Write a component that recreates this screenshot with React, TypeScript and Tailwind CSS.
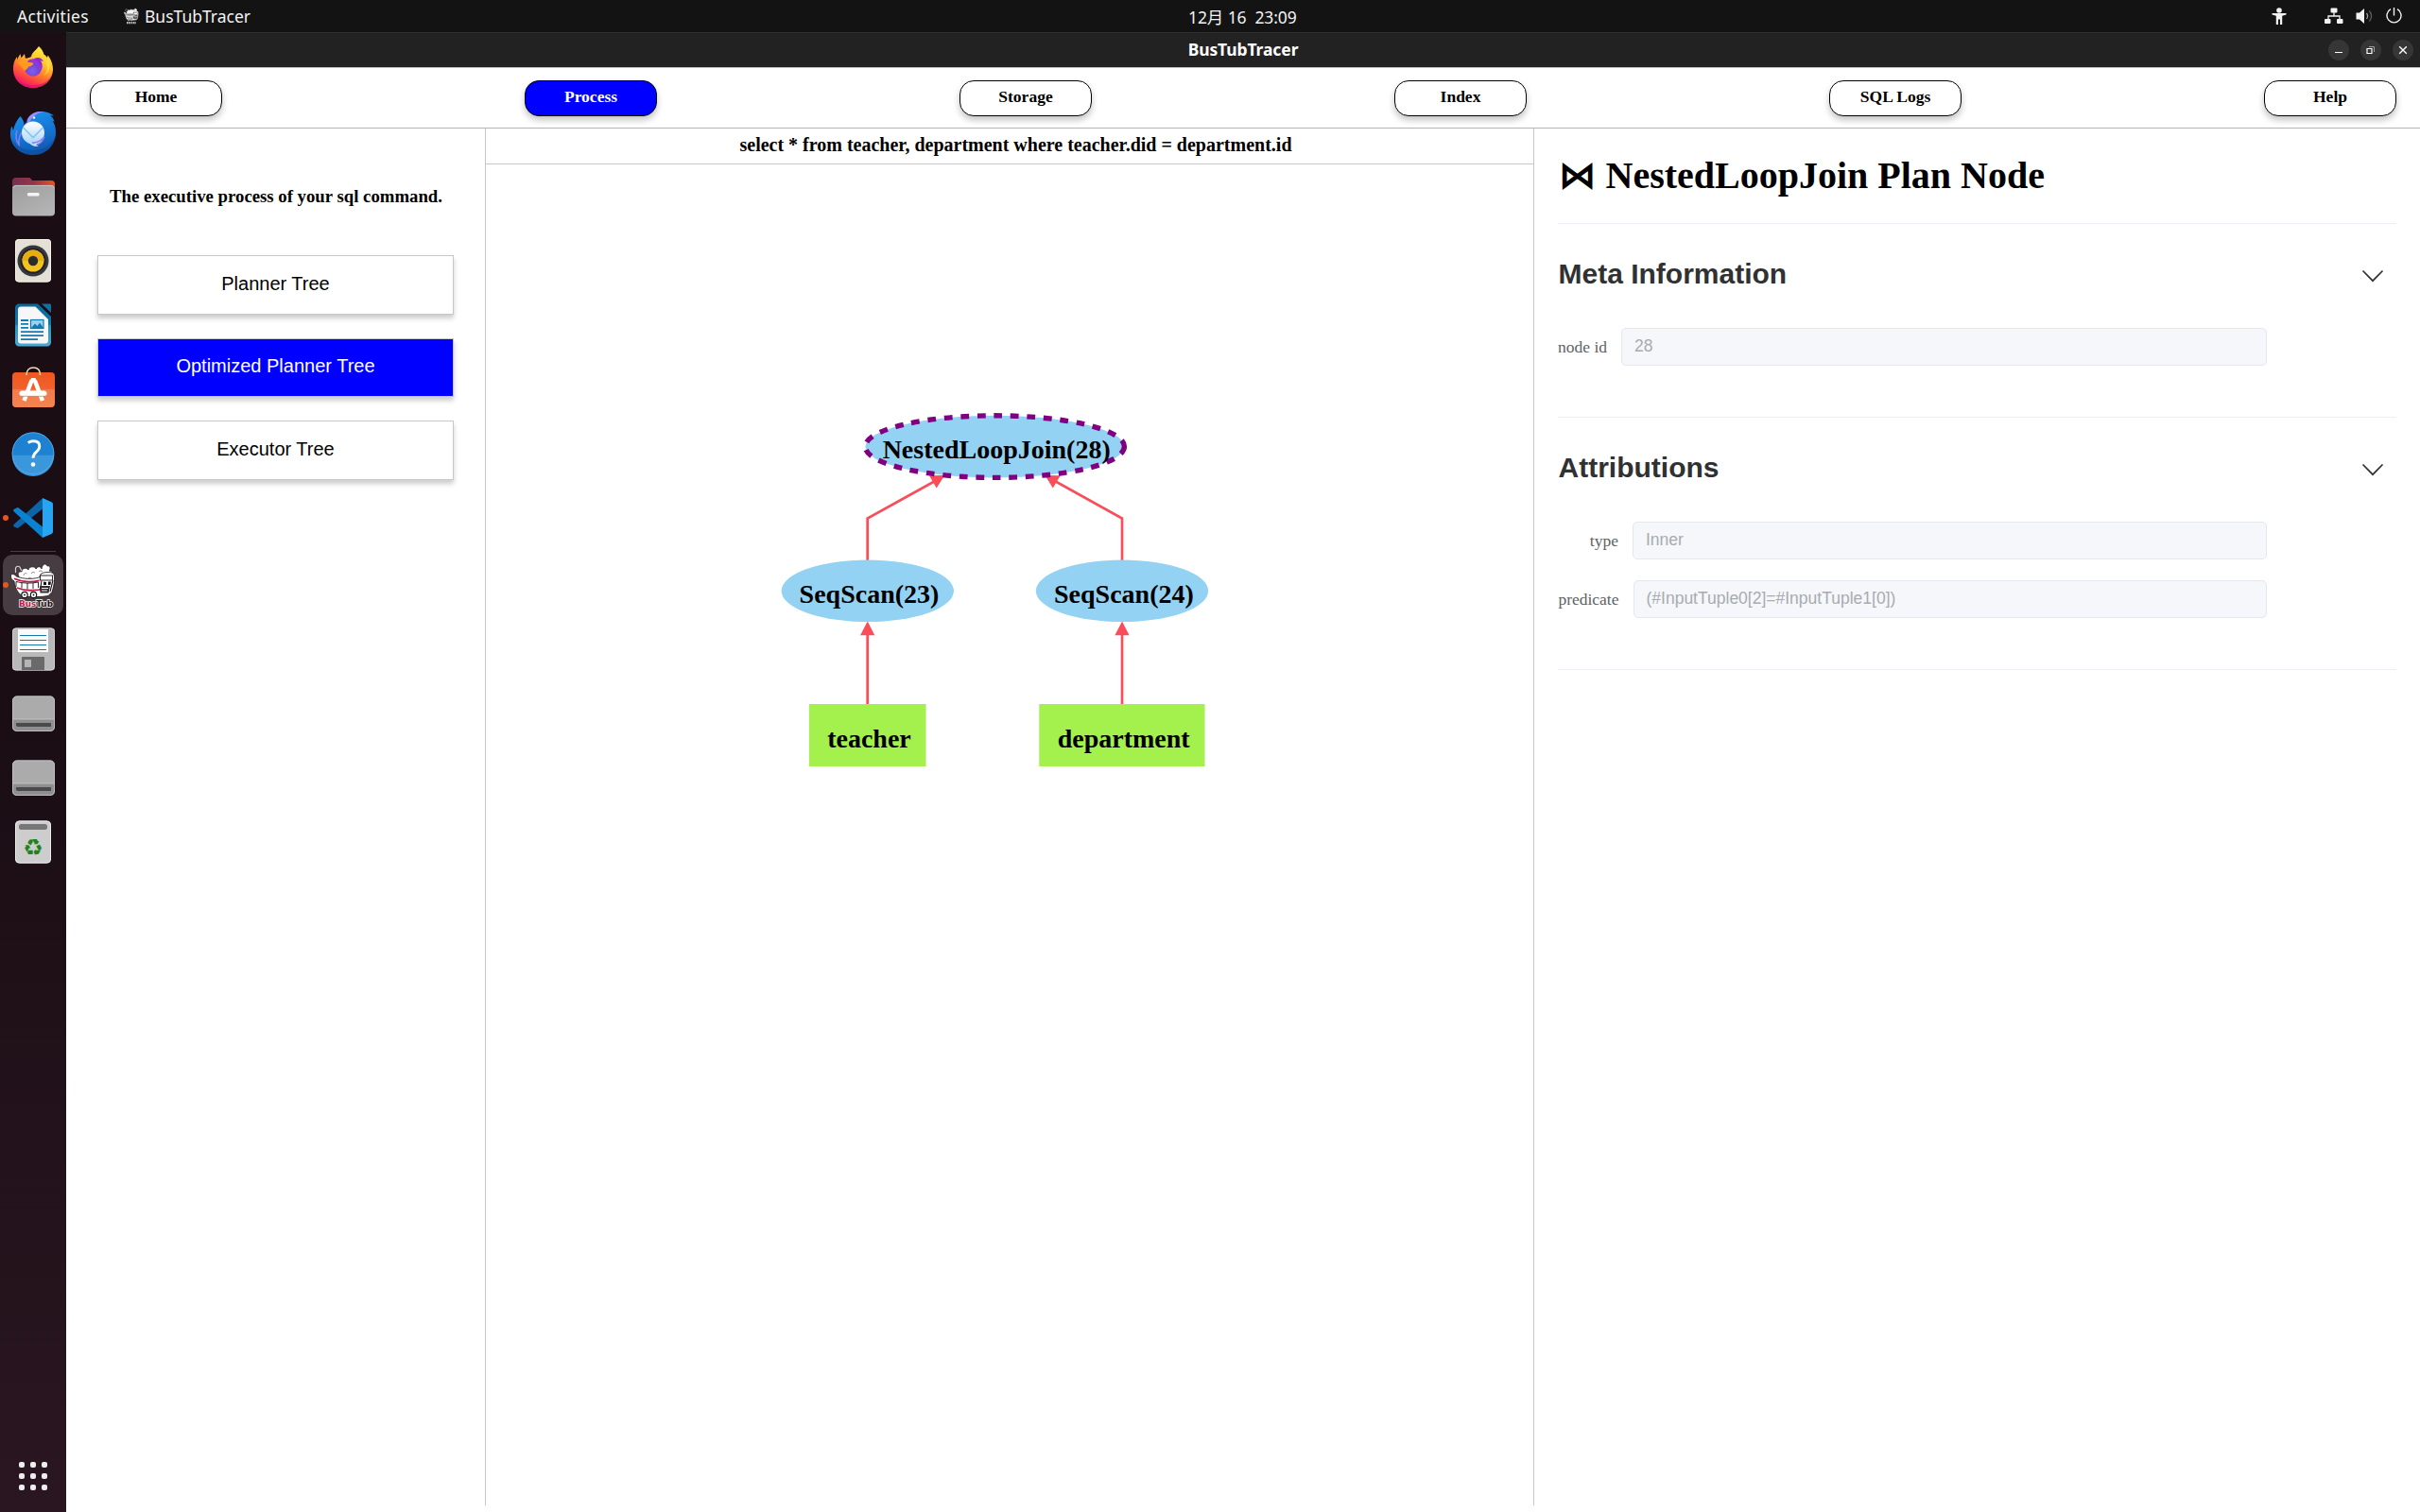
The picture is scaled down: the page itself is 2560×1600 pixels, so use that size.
import React from "react";

const SERIF = "font-['Liberation_Serif',serif]";
const SANS = "font-['Liberation_Sans',sans-serif]";

/* ---------- dock icons (48 x 48) ---------- */

const Icon = ({ children }: { children: React.ReactNode }) => (
  <svg width="48" height="48" viewBox="0 0 48 48" className="shrink-0">
    {children}
  </svg>
);

const Firefox = () => (
  <Icon>
    <defs>
      <linearGradient id="ffBody" x1="0.8" y1="0" x2="0.3" y2="1">
        <stop offset="0" stopColor="#fff14a" />
        <stop offset="0.35" stopColor="#ffc52c" />
        <stop offset="0.6" stopColor="#ff7a2b" />
        <stop offset="0.82" stopColor="#ff3a4a" />
        <stop offset="1" stopColor="#e5106f" />
      </linearGradient>
      <radialGradient id="ffGlobe" cx="0.45" cy="0.7" r="0.7">
        <stop offset="0" stopColor="#7a63e8" />
        <stop offset="0.6" stopColor="#7a3fd8" />
        <stop offset="1" stopColor="#b02ce0" />
      </radialGradient>
    </defs>
    <path
      d="M30 1c3 2.500 5 6 5.400 8.500 1.600 1 2.600 2 3.600 3.500l.6-2.500c2.500 3 5.400 8.500 5.400 14.500C45 36 36 45 24 45S3 36 3 25c0-6 1.500-9.500 4-13v3l3.400-6 1.100 4.300L15 9l.8 4.600c2 .2 3.600-.6 6.200-1.600C22.500 7.500 27 5.500 30 1z"
      fill="url(#ffBody)"
    />
    <path d="M3.300 28C6 38 14 42 24 42s18-4 20.500-13C43 38.500 34.500 45 24 45 12.500 45 4.500 37.500 3.300 28z" fill="#e0126c" opacity="0.75" />
    <circle cx="24" cy="23.500" r="9.200" fill="url(#ffGlobe)" />
    <path d="M7.500 18.500c5-3 8-3 11-1 2 1 5 .8 6 1.500-.5 2-2.500 3-5 3.500-1 2-3 3-4.500 4.500-2-2-3-5-7.500-8.500z" fill="#ff9a1f" />
    <path d="M24 14.500c5-3 9-1.500 11 2.500l-3-1c2 3 2.500 7 .5 11 1-6-3-10.500-8.500-12.500z" fill="#8d2bd2" />
    <path d="M36 15c4 5 4 12-1 17 7-3 9-11 5-18l-1 3z" fill="#ffe14a" opacity="0.6" />
  </Icon>
);

const Thunderbird = () => (
  <Icon>
    <defs>
      <linearGradient id="tbBody" x1="0.3" y1="0" x2="0.6" y2="1">
        <stop offset="0" stopColor="#1a92ee" />
        <stop offset="0.6" stopColor="#1470cf" />
        <stop offset="1" stopColor="#0f55ac" />
      </linearGradient>
      <linearGradient id="tbMail" x1="0" y1="0" x2="0" y2="1">
        <stop offset="0" stopColor="#ffffff" />
        <stop offset="1" stopColor="#a9d6fb" />
      </linearGradient>
    </defs>
    <path
      d="M10.500 7c2.500 3 4 6 4 9l2.500-3C18 7 24 2 32 2c6 0 11 2 14 4.500l-4-.2c2.500 1.500 4 4 4.500 6.500l-2-.8C47 15 48 19 48 24c0 13-10 24-24 24S0 38 0 26c0-4 .5-7 1.500-8.500L3 22c1-6 4-11 7.500-15z"
      fill="url(#tbBody)"
    />
    <path d="M18 12c1-6 8-11 17-9.700C27 3.500 22 9 19.500 15c-1-1-1.800-2-1.500-3z" fill="#a48cf2" />
    <path d="M7 22c-2 6-1 11 2 15-.5-5 .2-9 3-13" fill="none" stroke="#7f7ff0" strokeWidth="1.500" />
    <circle cx="24" cy="24.500" r="12" fill="url(#tbMail)" />
    <path d="M13.500 19l10.500 10.500L34.500 19" fill="none" stroke="#8ac3ef" strokeWidth="1.600" />
    <path d="M19 34c4 4 10 3 16-4-1 5-5 7-8 7 1 1 2 1.500 3 2-5 .5-9-1.500-11-5z" fill="#c7e1fb" />
    <path d="M23 35c5 .5 9-2 13-6-2 5-5 7-8 8" fill="none" stroke="#8c7cea" strokeWidth="1.400" />
    <circle cx="25" cy="8.500" r="1.300" fill="#e6f4ff" />
    <path d="M2 31c5 9 13 12 22 12s18-4 23-13c-2 11-11 18-23 18S4 42 2 31z" fill="#0c4a9a" opacity="0.5" />
  </Icon>
);

const Files = () => (
  <Icon>
    <defs>
      <linearGradient id="flBack" x1="0" y1="0" x2="1" y2="0">
        <stop offset="0" stopColor="#77304f" />
        <stop offset="0.5" stopColor="#93354a" />
        <stop offset="1" stopColor="#e9551f" />
      </linearGradient>
      <linearGradient id="flFront" x1="0" y1="0" x2="0.7" y2="1">
        <stop offset="0" stopColor="#9d9d9d" />
        <stop offset="1" stopColor="#b4b4b4" />
      </linearGradient>
    </defs>
    <path d="M2 7.500C2 5.500 3.500 4 5.500 4h13.800c1 0 1.900.5 2.500 1.300l1.300 1.700h20.400c2 0 3.500 1.500 3.500 3.500V20H2z" fill="url(#flBack)" />
    <rect x="2" y="12" width="45" height="32.500" rx="4" fill="url(#flFront)" />
    <path d="M3 15c.5-1.800 1.500-2.600 3-2.600h37c1.500 0 2.500.8 3 2.600" fill="none" stroke="#c4c4c4" strokeWidth="1" />
    <rect x="18" y="20" width="12.500" height="3.500" rx="1.200" fill="#f4f4f4" />
  </Icon>
);

const Speaker = () => (
  <Icon>
    <rect x="5" y="1" width="38" height="45.500" rx="4" fill="#e4e0d6" />
    <rect x="5.500" y="1.500" width="37" height="44.500" rx="3.500" fill="none" stroke="#f5f2ea" strokeWidth="1" />
    <circle cx="24" cy="24" r="16.500" fill="#36383f" />
    <circle cx="24" cy="24" r="13.500" fill="#202127" />
    <circle cx="24" cy="24" r="11.500" fill="#f3c320" />
    <path d="M12.500 24a11.500 11.500 0 0123 0z" fill="#e5ad12" />
    <circle cx="24" cy="24" r="5.200" fill="#2b2c2e" />
  </Icon>
);

const Writer = () => (
  <Icon>
    <defs>
      <linearGradient id="wrFrame" x1="0" y1="0" x2="0" y2="1">
        <stop offset="0" stopColor="#0c6698" />
        <stop offset="0.48" stopColor="#0e79b2" />
        <stop offset="0.52" stopColor="#2795c6" />
        <stop offset="1" stopColor="#46aad6" />
      </linearGradient>
    </defs>
    <path d="M9 1.500h20L43 15v27.500c0 2.200-1.800 4-4 4H9c-2.200 0-4-1.800-4-4v-37c0-2.200 1.800-4 4-4z" fill="url(#wrFrame)" />
    <path d="M11 4.500h15.500L40 18v22.500c0 1.700-1.300 3-3 3H11c-1.700 0-3-1.300-3-3v-33c0-1.700 1.300-3 3-3z" fill="#f7f7f7" />
    <path d="M33 1.500h8.500c1 0 1.500.5 1.500 1.500v8z" fill="#12719f" />
    <path d="M11 19h8M11 22.800h8M11 26.800h8M11 31.200h24M11 35.200h24M11 39.200h18" stroke="#0f7cb4" strokeWidth="1.800" />
    <rect x="21.500" y="18.500" width="13.500" height="9" fill="#9fd0ee" stroke="#0f7cb4" strokeWidth="1.200" />
    <path d="M22 27l4-4.500 2.500 2.500 2.500-3.500 4 5.500z" fill="#0f7cb4" />
  </Icon>
);

const Software = () => (
  <Icon>
    <defs>
      <linearGradient id="swBag" x1="0" y1="0" x2="0" y2="1">
        <stop offset="0" stopColor="#f1561f" />
        <stop offset="0.49" stopColor="#f1622d" />
        <stop offset="0.5" stopColor="#f37b4b" />
        <stop offset="1" stopColor="#f3844f" />
      </linearGradient>
    </defs>
    <rect x="2" y="6" width="45" height="37" rx="4" fill="url(#swBag)" />
    <path d="M17 9C17 3.500 20 1 24.300 1S31.500 3.500 31.500 9" fill="none" stroke="#f0dcae" strokeWidth="1.600" />
    <path d="M14.500 36L22.500 14.500M34 36L25.800 14.500" stroke="#fff" strokeWidth="4.500" />
    <path d="M22 12h4.500l1 3h-6.500z" fill="#fff" />
    <rect x="9.500" y="25.500" width="29" height="5.400" rx="2.700" fill="#fff" />
    <path d="M12 31.300h25" stroke="#f37b4b" strokeWidth="0.800" />
  </Icon>
);

const HelpIcon = () => (
  <Icon>
    <circle cx="24" cy="23.700" r="22.300" fill="#1e82d2" />
    <path d="M1.700 25.700h44.600a22.300 22.300 0 01-44.600 0z" fill="#3b97dc" />
    <circle cx="24" cy="23.700" r="21.900" fill="none" stroke="#5aa9e4" strokeWidth="0.900" />
    <path d="M18.700 12.500c2-1.300 3.600-1.700 5.800-1.700 4 0 6.300 2 6.300 5.500 0 3-1.800 4.700-3.700 6.300-2.100 1.800-3.100 3-3.100 6.200" fill="none" stroke="#fff" strokeWidth="2.900" />
    <circle cx="24" cy="35.500" r="2.300" fill="#fff" />
  </Icon>
);

const VSCode = () => (
  <Icon>
    <path d="M3.600 33.200a1.500 1.500 0 010-2.200L34 3.200v11.400L8.500 34.500a1.500 1.500 0 01-1.900-.1z" fill="#0b65a9" />
    <path d="M3.600 15a1.500 1.500 0 000 2.200L34 45V33.500L8.500 13.300a1.500 1.500 0 00-1.900.1z" fill="#0a82d0" />
    <path d="M34 3l9.500 4.300c1 .5 1.500 1.400 1.500 2.500v28.600c0 1.100-.6 2-1.500 2.500L34 45.100z" fill="#27a4f2" />
  </Icon>
);

const BusTubDrawing = () => (
  <>
    <path d="M9 15c-2-3 0-6 3-5 0-4 5-5 7-2 1-4 7-4 8-1 2-3 5-3 6 0 1-6 5-6 6-3 3-1 4 3 2 5 4 0 4 4 2 6l-8 3-25 1z" fill="#fff" stroke="#1b1114" strokeWidth="0.700" />
    <path d="M14 14c0-2 2-3 3.500-2M22 12c1-2 3-2 4-.5M30 10c1-1.500 3-1.500 4 0M19 17c1-1 2-1 3 0" fill="none" stroke="#6b6266" strokeWidth="0.700" />
    <path d="M0.500 13.500c2-2 4-.5 6 1.500 8 3 17 3 24 1l2-4c4-2 9-2 13-.5 2 4 1 12-1.500 20L40 35.500c-8 1.500-20 1.500-28 0C7.500 32 4.500 26 4 20c-2-1-4-3-3.500-6.500z" fill="#fff" stroke="#1b1114" strokeWidth="0.800" />
    <path d="M4 17.300c9 4 19 3.800 26.500 2M7 27c8 3.500 20 3.500 28 1" fill="none" stroke="#c8174a" strokeWidth="1.800" />
    <path d="M6 20.500v5.500M12 21.500v6M18 22v6.500M24 22v6M29.500 21v6M6 20.500c8 2 16 2 23.500.5" fill="none" stroke="#1b1114" strokeWidth="0.900" />
    <rect x="31.500" y="14" width="13" height="5" fill="#fff" stroke="#1b1114" strokeWidth="0.900" />
    <path d="M33 19.500l-1.500 10M45 19l-3 12" stroke="#1b1114" strokeWidth="1.100" />
    <path d="M35 20.500l3 .5v3h-3zM40 20.500h3l-.6 3.500H40z" fill="#1b1114" />
    <path d="M31 25h11l-1.500 7.500h-9z" fill="#332c2f" />
    <path d="M33 27.500h7M33 30h6" stroke="#fff" strokeWidth="0.900" />
    <path d="M5.500 11V6.500C6 3.500 10 3.500 10.500 6.500L12 9" fill="none" stroke="#d5d0d2" strokeWidth="1.200" />
    <circle cx="15" cy="34.500" r="3.200" fill="#fff" stroke="#1b1114" strokeWidth="1.200" />
    <circle cx="24.500" cy="34.500" r="3.200" fill="#fff" stroke="#1b1114" strokeWidth="1.200" />
    <circle cx="15" cy="34.500" r="0.900" fill="#1b1114" />
    <circle cx="24.500" cy="34.500" r="0.900" fill="#1b1114" />
  </>
);

const BusTub = () => (
  <Icon>
    <BusTubDrawing />
    <text x="9" y="47" textLength="36" lengthAdjust="spacingAndGlyphs" fontSize="9.500" fontWeight="900" className="font-['DejaVu_Sans',sans-serif]" stroke="#fff" strokeWidth="1.400" paintOrder="stroke">
      <tspan fill="#c8174a">Bus</tspan>
      <tspan fill="#1b1114">Tub</tspan>
    </text>
  </Icon>
);

const Floppy = () => (
  <Icon>
    <rect x="2" y="1.500" width="45" height="45" rx="4" fill="#b9b9b9" />
    <rect x="2.500" y="2" width="44" height="44" rx="3.500" fill="none" stroke="#d0d0d0" strokeWidth="1" />
    <path d="M8 3h32v24H8z" fill="#fafafa" />
    <path d="M10 9.500h28M10 14.500h28M10 19.500h28M10 24.500h28" stroke="#1778a8" strokeWidth="1" />
    <path d="M12 33c0-.6.4-1 1-1h22c.6 0 1 .4 1 1v13H12z" fill="#6a6a6a" />
    <rect x="15" y="35" width="7" height="8" rx="0.600" fill="#b5b5b5" />
  </Icon>
);

const Drive = () => (
  <Icon>
    <rect x="2" y="5.500" width="45" height="37.500" rx="5" fill="#ababab" />
    <path d="M2 30h45v8c0 2.800-2.200 5-5 5H7c-2.800 0-5-2.200-5-5z" fill="#8f8f8f" />
    <path d="M2 30h45" stroke="#cacaca" strokeWidth="0.800" />
    <rect x="2.500" y="6" width="44" height="36.500" rx="4.500" fill="none" stroke="#c2c2c2" strokeWidth="0.900" />
    <path d="M6 34h37v4H8c-1.200 0-2-.8-2-2z" fill="#4a4a4a" />
  </Icon>
);

const Trash = () => (
  <Icon>
    <rect x="5" y="1.500" width="38" height="45" rx="4.500" fill="#cdcdcd" />
    <rect x="5.500" y="2" width="37" height="44" rx="4" fill="none" stroke="#ececec" strokeWidth="1" />
    <rect x="9" y="5" width="30" height="6" rx="2.500" fill="#777" />
    <text x="24" y="38" textAnchor="middle" fontSize="24" fill="#22821c" className="font-['DejaVu_Sans',sans-serif]">
      ♻
    </text>
  </Icon>
);

const Slot = ({ children, active, running }: { children: React.ReactNode; active?: boolean; running?: boolean }) => (
  <div className="relative flex h-[68px] w-[70px] shrink-0 items-center justify-center">
    <div className={active ? "flex size-16 items-center justify-center rounded-[10px] bg-[#463c42]" : "flex size-16 items-center justify-center"}>
      {children}
    </div>
    {running && <span className="absolute top-[31px] left-[3px] size-[6px] rounded-full bg-[#e95420]" />}
  </div>
);

const Dock = () => (
  <aside className="flex w-[70px] shrink-0 flex-col bg-linear-to-b from-[#1a0d14] from-45% to-[#2a1620] pt-[4px]">
    <Slot><Firefox /></Slot>
    <Slot><Thunderbird /></Slot>
    <Slot><Files /></Slot>
    <Slot><Speaker /></Slot>
    <Slot><Writer /></Slot>
    <Slot><Software /></Slot>
    <Slot><HelpIcon /></Slot>
    <Slot running><VSCode /></Slot>
    <div className="flex h-[3px] shrink-0 items-center justify-center">
      <div className="h-px w-12 bg-[#473d42]" />
    </div>
    <Slot active running><BusTub /></Slot>
    <Slot><Floppy /></Slot>
    <Slot><Drive /></Slot>
    <Slot><Drive /></Slot>
    <Slot><Trash /></Slot>
    <div className="mx-auto mt-auto mb-[23px] grid grid-cols-3 gap-[6px]">
      {Array.from({ length: 9 }, (_, i) => (
        <span key={i} className="size-[6px] rounded-[2px] bg-[#f0eeed]" />
      ))}
    </div>
  </aside>
);

/* ---------- desktop top bar ---------- */

const TopBar = () => (
  <header className="relative flex h-[34px] shrink-0 items-center bg-[#131313] font-['Noto_Sans','Noto_Sans_CJK_SC',sans-serif] text-[17.5px] leading-[35px] text-[#f2f2f2]">
    <span className="ml-[18px] w-[113px] pt-px tracking-[0.3px]">Activities</span>
    <svg width="16" height="18" viewBox="0 0 48 48" preserveAspectRatio="none" className="mr-[6px] grayscale">
      <BusTubDrawing />
      <path d="M9 43h30" stroke="#bbb" strokeWidth="6" strokeDasharray="5 2" />
    </svg>
    <span className="pt-px">BusTubTracer</span>
    <span className="absolute top-px left-[1257px] tracking-[-0.1px] whitespace-pre">12月 16  23:09</span>
    <div className="ml-auto flex h-full items-start pt-2">
      <svg width="16" height="18" viewBox="0 0 16 18" fill="#f2f2f2" className="mr-10">
        <circle cx="8" cy="3" r="2.800" />
        <path d="M.5 6h15v1.500l-4.300 1.200V18H9v-5.500H7V18H4.800V8.700L.5 7.500z" />
      </svg>
      <svg width="20" height="18" viewBox="0 0 20 18" fill="#f2f2f2" className="mr-[13px]">
        <rect x="6.500" y="0.500" width="7" height="5" rx="1" />
        <rect x="0" y="12" width="6.500" height="5" rx="1" />
        <rect x="13" y="12" width="6.500" height="5" rx="1" />
        <path d="M10 5v4M4 12.500V9h12v3.500" fill="none" stroke="#f2f2f2" strokeWidth="1.300" />
      </svg>
      <svg width="19" height="18" viewBox="0 0 19 18" className="mr-[13px]">
        <path d="M.5 5.500H4L9 1v16l-5-4.500H.5z" fill="#f2f2f2" />
        <path d="M11.500 6c1.300 1.700 1.300 4.300 0 6" fill="none" stroke="#9a9a9a" strokeWidth="1.300" />
        <path d="M14.300 3.500c3 3.200 3 7.800 0 11" fill="none" stroke="#5e5e5e" strokeWidth="1.300" />
      </svg>
      <svg width="17" height="17" viewBox="0 0 17 17" fill="none" stroke="#f2f2f2" strokeWidth="1.400" className="mr-[19px]">
        <path d="M5 1.700a7.500 7.500 0 107 0" />
        <path d="M8.500 0v8.500" />
      </svg>
    </div>
  </header>
);

const WinButton = ({ children }: { children: React.ReactNode }) => (
  <span className="flex size-[22px] items-center justify-center rounded-full bg-[#363636]">
    <svg width="10" height="10" viewBox="0 0 10 10" fill="none" stroke="#fff" strokeWidth="1">
      {children}
    </svg>
  </span>
);

const TitleBar = () => (
  <div className="relative flex h-[38px] shrink-0 items-center justify-end gap-3 border-t border-b border-t-[#303030] border-b-[#c4bec1] bg-[#222222] pr-[7px]">
    <div className="absolute inset-x-0 top-0 flex justify-center font-['Noto_Sans',sans-serif] text-[17.5px] leading-[35px] font-bold text-white">
      <span className="tracking-[-0.1px]">BusTubTracer</span>
    </div>
    <WinButton><path d="M1 7.500h8" /></WinButton>
    <WinButton>
      <path d="M1 3.500h5v5h-5z" strokeWidth="1.200" />
      <path d="M3 1.500h5.500V7" stroke="#a0a0a0" />
    </WinButton>
    <WinButton><path d="M1.200 1.200l7.600 7.600M8.800 1.200l-7.600 7.600" strokeWidth="1.300" /></WinButton>
  </div>
);

/* ---------- application ---------- */

const tabs = ["Home", "Process", "Storage", "Index", "SQL Logs", "Help"];

const Nav = () => (
  <nav className="flex h-16 shrink-0 items-start justify-between border-b border-[#b4b4b4] px-[25px] pt-[13px]">
    {tabs.map((t) => (
      <button
        key={t}
        className={
          "flex h-[38px] w-[140px] justify-center rounded-[15px] border border-black pt-[6px] text-[17.5px] leading-[21px] font-bold shadow-[0_4px_7px_rgba(0,0,0,0.24)] " +
          (t === "Process" ? "bg-[#0000ff] text-white" : "bg-white text-black")
        }
      >
        {t}
      </button>
    ))}
  </nav>
);

const TreeButton = ({ label, on }: { label: string; on?: boolean }) => (
  <button
    className={
      `flex h-[62.5px] w-[377px] justify-center border border-[#c8c8c8] pt-[17.5px] text-[20px] leading-[23px] shadow-[0_4px_5px_rgba(0,0,0,0.2)] ${SANS} ` +
      (on ? "bg-[#0000ff] text-white" : "bg-white text-black")
    }
  >
    {label}
  </button>
);

const Sidebar = () => (
  <section className="flex w-[444px] shrink-0 flex-col border-r border-[#c8c8c8] pt-[61px] pl-[33px]">
    <h4 className="w-[378px] text-center text-[18.75px] leading-[22px] font-bold">The executive process of your sql command.</h4>
    <div className="mt-[51px] flex flex-col gap-[25px]">
      <TreeButton label="Planner Tree" />
      <TreeButton label="Optimized Planner Tree" on />
      <TreeButton label="Executor Tree" />
    </div>
  </section>
);

const PlanGraph = () => (
  <svg width="500" height="420" viewBox="800 420 500 420" className="mt-[246px] ml-[286px]">
    <g fill="none" stroke="#fb4d59" strokeWidth="2.700">
      <path d="M917.700 745V670M1187 745V670" />
      <path d="M917.700 593V548.500L990 508.500M1187 593V548.500L1115 508.500" />
    </g>
    <g fill="#fb4d59">
      <path d="M917.700 657.500l7.600 14.800h-15.200zM1187 657.500l7.600 14.800h-15.200z" />
      <path d="M999.300 503L983 503.300L990.700 516.500zM1105.500 503L1121.700 503.300L1113.800 516.500z" />
    </g>
    <g fill="#93d2f3">
      <ellipse cx="1052.400" cy="472.600" rx="137" ry="32.800" stroke="#800080" strokeWidth="5.400" strokeDasharray="8.75 8.75" />
      <ellipse cx="917.800" cy="625.300" rx="91.200" ry="32.800" />
      <ellipse cx="1187" cy="625.300" rx="91.200" ry="32.800" />
    </g>
    <g fill="#a4f04d">
      <rect x="856" y="745" width="123.500" height="66" />
      <rect x="1099.300" y="745" width="175.200" height="66" />
    </g>
    <g fontSize="28" fontWeight="bold" textAnchor="middle" fill="#000">
      <text x="1054.200" y="484.700">NestedLoopJoin(28)</text>
      <text x="919.500" y="638">SeqScan(23)</text>
      <text x="1188.900" y="638">SeqScan(24)</text>
      <text x="919.500" y="791">teacher</text>
      <text x="1188.700" y="791">department</text>
    </g>
  </svg>
);

const Canvas = () => (
  <section className="flex w-[1109px] shrink-0 flex-col border-r border-[#c8c8c8]">
    <h4 className="h-[38px] border-b border-[#c8c8c8] pt-[6px] pl-[13px] text-center text-[20px] leading-[22px] font-bold">
      select * from teacher, department where teacher.did = department.id
    </h4>
    <PlanGraph />
  </section>
);

const SectionHead = ({ title }: { title: string }) => (
  <div className={`flex items-center justify-between pr-[13px] pl-[0.5px] text-[30px] leading-[36px] font-bold text-[#303133] ${SANS}`}>
    <span>{title}</span>
    <svg width="24" height="14" viewBox="0 0 24 14" fill="none" stroke="#303133" strokeWidth="1.700" className="mt-[3px]">
      <path d="M1.500 1.500L12 12.200L22.500 1.500" />
    </svg>
  </div>
);

const Field = ({ label, value, labelWidth }: { label: string; value: string; labelWidth: string }) => (
  <div className="flex h-10 w-[750px]">
    <label className={`pt-[10px] text-right text-[17.5px] leading-[21px] whitespace-nowrap text-[#606266] ${labelWidth}`}>{label}</label>
    <div className={`ml-[15px] h-10 flex-1 rounded-[5px] border border-[#e4e7ed] bg-[#f5f7fa] px-[13px] pt-[8px] text-[17.5px] leading-[21px] text-[#a8abb2] ${SANS}`}>
      {value}
    </div>
  </div>
);

const Details = () => (
  <section className="flex flex-1 flex-col px-[25px]">
    <h1 className="h-[101px] border-b border-[#ebeef5] pt-[26px] pl-[0.5px] text-[40px] leading-[46px] font-bold">
      <span className="font-['DejaVu_Sans',sans-serif]">⋈</span> NestedLoopJoin Plan Node
    </h1>
    <div className="h-[205px] border-b border-[#ebeef5] pt-[35px]">
      <SectionHead title="Meta Information" />
      <div className="mt-[39px]">
        <Field label="node id" value="28" labelWidth="w-[52px]" />
      </div>
    </div>
    <div className="h-[267px] border-b border-[#ebeef5] pt-[35px]">
      <SectionHead title="Attributions" />
      <div className="mt-[39px] flex flex-col gap-[22px]">
        <Field label="type" value="Inner" labelWidth="w-[64px]" />
        <Field label="predicate" value="(#InputTuple0[2]=#InputTuple1[0])" labelWidth="w-[64.5px]" />
      </div>
    </div>
  </section>
);

export default function App() {
  return (
    <div className="flex h-[1600px] w-[2560px] flex-col overflow-hidden bg-white text-black">
      <TopBar />
      <div className="flex min-h-0 flex-1">
        <Dock />
        <div className={`flex min-w-0 flex-1 flex-col ${SERIF}`}>
          <TitleBar />
          <Nav />
          <main className="flex h-[1457px]">
            <Sidebar />
            <Canvas />
            <Details />
          </main>
        </div>
      </div>
    </div>
  );
}
